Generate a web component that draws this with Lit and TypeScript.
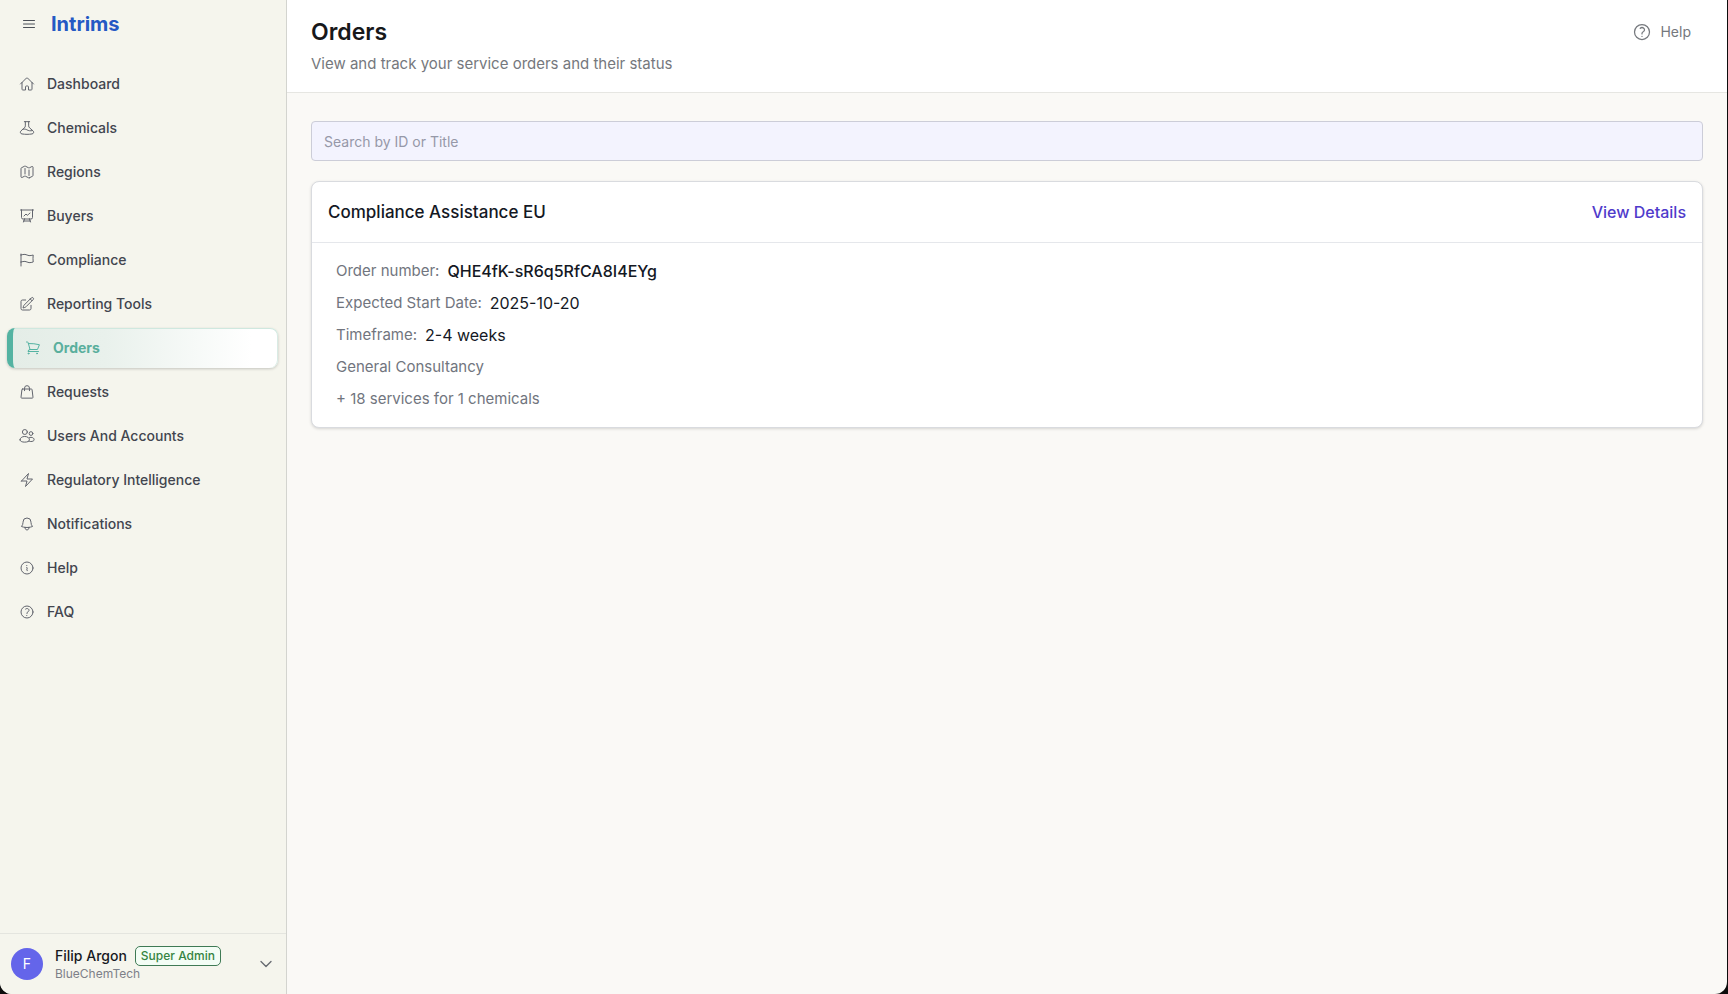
import { LitElement, html, css, svg, type SVGTemplateResult } from "lit";
import { customElement, property, state } from "lit/decorators.js";

const ICONS: Record<string, SVGTemplateResult> = {
  menu: svg`<path d="M3.750 6.750h16.500M3.750 12h16.500m-16.500 5.250h16.500"/>`,
  home: svg`<path d="m2.250 12 8.954-8.955a1.126 1.126 0 0 1 1.591 0L21.750 12M4.500 9.750v10.125c0 .621.504 1.125 1.125 1.125H9.750v-4.875c0-.621.504-1.125 1.125-1.125h2.250c.621 0 1.125.504 1.125 1.125V21h4.125c.621 0 1.125-.504 1.125-1.125V9.750"/>`,
  flask: svg`<path d="M8 2.500h8M9.500 2.500v6.300c0 1.200-.5 2.200-1.400 3L3 16.300c-1.800 1.700-1 4.300 1.400 4.600 5 .8 10.200.8 15.200 0 2.400-.3 3.200-2.900 1.400-4.600l-5.100-4.500c-.9-.8-1.400-1.800-1.400-3V2.500M6.200 13.700c2.400-.5 4.200.2 5.800 1.100 2.200 1.300 4.800 1.900 8 1.100"/>`,
  map: svg`<path d="M9 6.750V15m6-6v8.250m.503 3.498 4.875-2.437c.381-.19.622-.58.622-1.006V4.820c0-.836-.88-1.380-1.628-1.006l-3.869 1.934c-.317.159-.69.159-1.006 0L9.503 3.252a1.125 1.125 0 0 0-1.006 0L3.622 5.689C3.240 5.880 3 6.270 3 6.695V19.180c0 .836.88 1.380 1.628 1.006l3.869-1.934c.317-.159.69-.159 1.006 0l4.994 2.497c.317.158.69.158 1.006 0Z"/>`,
  chart: svg`<path d="M3.750 3v11.250A2.250 2.250 0 0 0 6 16.500h2.250M3.750 3h-1.500m1.500 0h16.500m0 0h1.500m-1.500 0v11.250A2.250 2.250 0 0 1 18 16.500h-2.250m-7.500 0h7.500m-7.500 0-1 3m8.500-3 1 3m0 0 .5 1.500m-.5-1.500h-9.500m0 0-.5 1.500m.75-9 3-3 2.148 2.148A12.061 12.061 0 0 1 16.500 7.605"/>`,
  flag: svg`<path d="M3 3v1.500M3 21v-6m0 0 2.770-.693a9 9 0 0 1 6.208.682l.108.054a9 9 0 0 0 6.086.710l3.114-.732a48.524 48.524 0 0 1-.005-10.499l-3.110.732a9 9 0 0 1-6.085-.711l-.108-.054a9 9 0 0 0-6.208-.682L3 4.500M3 15V4.500"/>`,
  pencil: svg`<path d="m16.862 4.487 1.687-1.688a1.875 1.875 0 1 1 2.652 2.652L10.582 16.070a4.500 4.500 0 0 1-1.897 1.130L6 18l.8-2.685a4.500 4.500 0 0 1 1.130-1.897l8.932-8.931Zm0 0L19.500 7.125M18 14v4.750A2.250 2.250 0 0 1 15.750 21H5.250A2.250 2.250 0 0 1 3 18.750V8.250A2.250 2.250 0 0 1 5.250 6H10"/>`,
  cart: svg`<path d="M2.250 3h1.386c.510 0 .955.343 1.087.835l.383 1.437M7.500 14.250a3 3 0 0 0-3 3h15.750m-12.750-3h11.218c1.121-2.300 2.100-4.684 2.924-7.138a60.114 60.114 0 0 0-16.536-1.840M7.500 14.250 5.106 5.272M6 20.250a.75.75 0 1 1-1.500 0 .75.75 0 0 1 1.500 0Zm12.750 0a.75.75 0 1 1-1.500 0 .75.75 0 0 1 1.500 0Z"/>`,
  bag: svg`<path d="M8.300 10V6.200a3.700 3.700 0 0 1 7.400 0V10M5.500 7.500h13c.6 0 1.100.4 1.100 1l1.400 11.400c.1.700-.4 1.300-1.100 1.300H4.100c-.7 0-1.200-.6-1.100-1.300L4.400 8.500c0-.6.500-1 1.100-1Z"/>`,
  users: svg`<circle cx="8.800" cy="6" r="3.700"/><circle cx="18" cy="8.300" r="2.800"/><path d="M1.500 17.800c0-2.900 3-5.100 7.100-5.100s7.100 2.200 7.100 5.100c0 2.100-3 3.400-7.100 3.400s-7.100-1.300-7.100-3.400ZM15 14.600c.9-.4 1.900-.6 3-.6 2.800 0 4.700 1.500 4.700 3.600 0 1.700-2.200 2.700-5 2.700-1.200 0-2.300-.2-3.200-.5"/>`,
  bolt: svg`<path d="m3.750 13.500 10.500-11.250L12 10.500h8.250L9.750 21.750 12 13.500H3.750Z"/>`,
  bell: svg`<path d="M14.857 17.082a23.848 23.848 0 0 0 5.454-1.310A8.967 8.967 0 0 1 18 9.750V9A6 6 0 0 0 6 9v.75a8.967 8.967 0 0 1-2.312 6.022c1.733.640 3.560 1.085 5.455 1.310m5.714 0a24.255 24.255 0 0 1-5.714 0m5.714 0a3 3 0 1 1-5.714 0"/>`,
  info: svg`<path d="m11.250 11.250.041-.020a.75.75 0 0 1 1.063.852l-.708 2.836a.75.75 0 0 0 1.063.853l.041-.021M21 12a9 9 0 1 1-18 0 9 9 0 0 1 18 0Zm-9-3.750h.008v.008H12V8.250Z"/>`,
  question: svg`<path d="M9.879 7.519c1.171-1.025 3.071-1.025 4.242 0 1.172 1.025 1.172 2.687 0 3.712-.203.179-.430.326-.670.442-.745.361-1.450.999-1.450 1.827v.75M21 12a9 9 0 1 1-18 0 9 9 0 0 1 18 0Zm-9 5.250h.008v.008H12v-.008Z"/>`,
  chevron: svg`<path stroke-width="2" d="m19.500 8.250-7.500 7.500-7.500-7.500"/>`,
};

@customElement("ui-icon")
class UiIcon extends LitElement {
  @property() name = "";
  static styles = css`
    :host { display: block; flex: none; width: 16px; height: 16px; }
    .glyph {
      display: block; width: 100%; height: 100%; fill: none; stroke: currentColor;
      stroke-width: 1.5; stroke-linecap: round; stroke-linejoin: round;
    }
  `;
  render() {
    return html`<svg class="glyph" viewBox="0 0 24 24" aria-hidden="true">${ICONS[this.name]}</svg>`;
  }
}

const NAV = [
  ["home", "Dashboard"],
  ["flask", "Chemicals"],
  ["map", "Regions"],
  ["chart", "Buyers"],
  ["flag", "Compliance"],
  ["pencil", "Reporting Tools"],
  ["cart", "Orders"],
  ["bag", "Requests"],
  ["users", "Users And Accounts"],
  ["bolt", "Regulatory Intelligence"],
  ["bell", "Notifications"],
  ["info", "Help"],
  ["question", "FAQ"],
];

@customElement("app-sidebar")
class AppSidebar extends LitElement {
  @property() current = "Orders";
  static styles = css`
    :host {
      display: flex; flex-direction: column; box-sizing: border-box; width: 287px; flex: none;
      background: #f5f5ed; border-right: 1px solid #d3d4cf;
    }
    .brand { display: flex; align-items: center; gap: 14px; height: 48px; padding: 0 21px; }
    .toggle { padding: 0; border: 0; background: none; color: #4b5058; cursor: pointer; }
    .logo { font-size: 20px; line-height: 28px; font-weight: 700; color: #2459c4; text-decoration: none; }
    .nav { flex: 1; padding: 16px 8px 16px 7px; }
    .list { display: flex; flex-direction: column; gap: 4px; margin: 0; padding: 0; list-style: none; }
    .item {
      display: flex; align-items: center; gap: 12px; box-sizing: border-box; height: 40px; padding: 0 12px;
      border-radius: 8px; color: #42454f; font-size: 14px; line-height: 20px; font-weight: 500; text-decoration: none;
    }
    .item ui-icon { color: #62656e; }
    .item.active {
      border-left: 6px solid #54b3a2; font-weight: 700; color: #5aaf9d;
      background: linear-gradient(90deg, #e4ede7, #e9f1ec 35%, #fff 90%);
      box-shadow: inset 0 1px #cfe8df, inset -1px 0 #d9ebe4, 0 1px 3px #00000033;
    }
    .item.active ui-icon { color: #54b3a2; }
    .account {
      display: flex; align-items: center; gap: 12px; width: 100%; padding: 12px 12px 12px 11px; border: 0;
      border-top: 1px solid #e4e5df; background: none; font: inherit; text-align: left; color: #17191f; cursor: pointer;
    }
    .avatar {
      display: grid; place-items: center; flex: none; width: 32px; height: 32px; border-radius: 50%;
      background: #6465ea; color: #fff; font-size: 14px; line-height: 20px;
    }
    .who { display: flex; flex-direction: column; flex: 1; }
    .line { display: flex; align-items: center; gap: 8px; font-size: 14px; line-height: 20px; font-weight: 500; }
    .badge {
      padding: 1px 5px; border: 1px solid #3f7a55; border-radius: 5px; background: #f3fdf5;
      color: #358442; font-size: 12px; line-height: 16px;
    }
    .org { color: #7d8088; font-size: 12px; line-height: 16px; }
    .chevron { color: #666a70; }
  `;
  render() {
    return html`
      <div class="brand">
        <button class="toggle" aria-label="Toggle menu"><ui-icon name="menu"></ui-icon></button>
        <a class="logo" href="#">Intrims</a>
      </div>
      <nav class="nav" aria-label="Main">
        <ul class="list">
          ${NAV.map(([icon, label]) => html`
            <li><a class="item ${label === this.current ? "active" : ""}" href="#"><ui-icon name=${icon}></ui-icon>${label}</a></li>`)}
        </ul>
      </nav>
      <button class="account">
        <span class="avatar">F</span>
        <span class="who">
          <span class="line">Filip Argon <span class="badge">Super Admin</span></span>
          <span class="org">BlueChemTech</span>
        </span>
        <ui-icon class="chevron" name="chevron"></ui-icon>
      </button>
    `;
  }
}

interface Order {
  title: string;
  number: string;
  start: string;
  timeframe: string;
  service: string;
  summary: string;
}

@customElement("order-card")
class OrderCard extends LitElement {
  @property({ attribute: false }) order!: Order;
  static styles = css`
    :host {
      display: block; background: #fff; border: 1px solid #d9dbdf; border-radius: 8px;
      box-shadow: 0 1px 3px #00000026;
    }
    .head {
      display: flex; align-items: center; justify-content: space-between; padding: 16px;
      border-bottom: 1px solid #e5e7eb;
    }
    .title { margin: 0; font-size: 17px; line-height: 28px; font-weight: 500; color: #141824; }
    .link { color: #4f3bcb; font-size: 16px; line-height: 24px; font-weight: 500; text-decoration: none; }
    .body { display: flex; flex-direction: column; gap: 8px; padding: 16px 24px; font-size: 15px; line-height: 24px; color: #71757e; }
    .facts { display: contents; }
    .row { display: flex; gap: 8px; }
    .value { margin: 0; font-size: 16px; color: #141824; }
    .strong { font-weight: 500; }
    .note { margin: 0; }
  `;
  render() {
    const o = this.order;
    return html`
      <div class="head">
        <h2 class="title">${o.title}</h2>
        <a class="link" href="#">View Details</a>
      </div>
      <div class="body">
        <dl class="facts">
          <div class="row"><dt>Order number:</dt><dd class="value strong">${o.number}</dd></div>
          <div class="row"><dt>Expected Start Date:</dt><dd class="value">${o.start}</dd></div>
          <div class="row"><dt>Timeframe:</dt><dd class="value">${o.timeframe}</dd></div>
        </dl>
        <p class="note">${o.service}</p>
        <p class="note">${o.summary}</p>
      </div>
    `;
  }
}

@customElement("app-root")
class AppRoot extends LitElement {
  @state() private query = "";
  private orders: Order[] = [
    {
      title: "Compliance Assistance EU",
      number: "QHE4fK-sR6q5RfCA8I4EYg",
      start: "2025-10-20",
      timeframe: "2-4 weeks",
      service: "General Consultancy",
      summary: "+ 18 services for 1 chemicals",
    },
  ];
  static styles = css`
    :host {
      display: flex; box-sizing: border-box; min-height: 100vh; padding-right: 1px; background: #0c0c0c;
      font-family: Inter, "Liberation Sans", sans-serif;
    }
    .window { display: flex; flex: 1; min-width: 0; overflow: hidden; border-radius: 0 0 12px 12px; background: #faf9f6; }
    .main { flex: 1; min-width: 0; }
    .header {
      display: flex; align-items: flex-start; justify-content: space-between; padding: 16px 24px;
      background: #fff; border-bottom: 1px solid #e6e6e2;
    }
    .title { margin: 0; font-size: 23px; line-height: 32px; font-weight: 600; color: #17181a; }
    .subtitle { margin: 4px 0 0; font-size: 15px; line-height: 24px; color: #75787d; }
    .help {
      display: flex; align-items: center; gap: 8px; padding: 6px 12px; border: 0; background: none; color: #75787d;
      font: inherit; font-size: 14px; line-height: 20px; cursor: pointer;
    }
    .help ui-icon { width: 20px; height: 20px; }
    .content { display: flex; flex-direction: column; gap: 20px; padding: 28px 24px; }
    .search {
      box-sizing: border-box; width: 100%; height: 40px; margin: 0; padding: 0 12px; border: 1px solid #cccdd8;
      border-radius: 4px; background: #f3f3fe; color: #141824; font: inherit; font-size: 14px; line-height: 20px;
    }
    .search::placeholder { color: #9698a8; opacity: 1; }
  `;
  render() {
    const q = this.query.toLowerCase();
    const shown = this.orders.filter((o) => `${o.number} ${o.title}`.toLowerCase().includes(q));
    return html`
      <div class="window">
        <app-sidebar current="Orders"></app-sidebar>
        <main class="main">
          <header class="header">
            <div>
              <h1 class="title">Orders</h1>
              <p class="subtitle">View and track your service orders and their status</p>
            </div>
            <button class="help"><ui-icon name="question"></ui-icon>Help</button>
          </header>
          <div class="content">
            <input class="search" type="search" aria-label="Search by ID or Title" placeholder="Search by ID or Title"
              .value=${this.query} @input=${(e: Event) => (this.query = (e.target as HTMLInputElement).value)} />
            ${shown.map((o) => html`<order-card .order=${o}></order-card>`)}
          </div>
        </main>
      </div>
    `;
  }
}
